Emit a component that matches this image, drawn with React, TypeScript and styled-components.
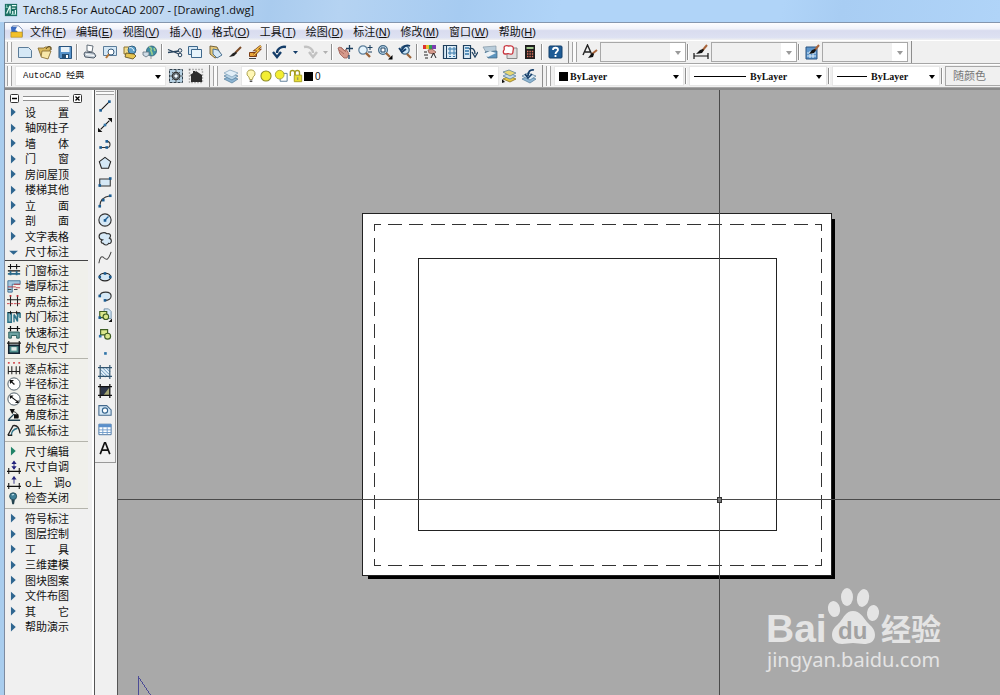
import React from 'react';
import styled, { createGlobalStyle } from 'styled-components';

const GlobalStyle = createGlobalStyle`
  * { box-sizing: border-box; }
  html, body { margin: 0; padding: 0; }
  body {
    background: #a9a9a9;
    color: #111;
    font-family: "Open Sans", "Noto Sans CJK SC", sans-serif;
    font-size: 11px;
  }
  button, select { font: inherit; color: inherit; }
`;

/* ---------- window chrome ---------- */

const Window = styled.div`
  display: flex;
  flex-direction: column;
  height: 100vh;
  overflow: hidden;
`;

const TitleBar = styled.header`
  display: flex;
  align-items: center;
  gap: 5px;
  height: 22px;
  padding: 0 0 2px 4px;
  background:
    linear-gradient(100deg, #d3e4f5 0, #c6dcf3 14%, #a9cbee 27%, #b5d3f2 34%, #a6cbf1 46%, #b0d4f8 56%, #b0d4f8 78%, #a8cdf3 84%, #b0d4f8 100%);
`;

const Title = styled.h1`
  margin: 0;
  font-family: "Open Sans", sans-serif;
  font-size: 11px;
  font-weight: 400;
  line-height: 18px;
  white-space: nowrap;
`;

const Frame = styled.div`
  flex: 1;
  display: flex;
  flex-direction: column;
  min-height: 0;
  border-left: 4px solid #a9cdee;
`;

const Client = styled.div`
  flex: 1;
  display: flex;
  flex-direction: column;
  min-height: 0;
  border-top: 1px solid #8496ae;
  border-left: 1px solid #7d8ba0;
  background: #f0f0f0;
`;

const MenuBar = styled.nav`
  display: flex;
  align-items: center;
  gap: 6px;
  height: 17px;
  padding-left: 5px;
  background: linear-gradient(#fdfdff 0, #f0f2fa 35%, #d9dcef 45%, #dde1f2 85%, #f0f0f0 100%);
`;

const MenuList = styled.div`
  display: flex;
  gap: 10px;
`;

const MenuItem = styled.button`
  padding: 0;
  border: 0;
  background: none;
  font-family: "Liberation Sans", "Noto Sans CJK SC", sans-serif;
  line-height: 16px;
  white-space: nowrap;
`;

/* ---------- toolbars ---------- */

const ToolbarRow = styled.div`
  display: flex;
  align-items: center;
  height: 24px;
  border-top: 1px solid #fff;
  border-bottom: 1px solid #a6a6a6;
  overflow: hidden;
`;

const Toolbar = styled.div`
  display: flex;
  align-items: center;
  flex: none;
  height: 22px;
  padding-right: 3px;
  border-right: 1px solid #8d8d8d;
  & + & { padding-left: 1px; }
`;

const Grip = styled.div<{ $across?: boolean }>`
  flex: none;
  width: ${(p) => (p.$across ? '18px' : '5px')};
  height: ${(p) => (p.$across ? '4px' : '20px')};
  margin: ${(p) => (p.$across ? '1px 0' : '0 3px 0 2px')};
  border: 1px solid #a3a3a3;
  border-width: ${(p) => (p.$across ? '1px 0' : '0 1px')};
  background: #fbfbfb;
`;

const ToolButton = styled.button<{ $narrow?: boolean; $tall?: number }>`
  display: flex;
  align-items: center;
  justify-content: center;
  flex: none;
  width: ${(p) => (p.$narrow ? '10px' : '20px')};
  height: ${(p) => p.$tall ?? 20}px;
  padding: 0;
  border: 0;
  background: none;
`;

const Separator = styled.span`
  flex: none;
  width: 2px;
  height: 16px;
  margin: 0 2px 0 1px;
  border-left: 1px solid #8f8f8f;
  background: #fff;
`;

const Combo = styled.div<{ $width: number; $inset: number; $disabled?: boolean }>`
  position: relative;
  display: flex;
  align-items: center;
  gap: 1px;
  flex: none;
  width: ${(p) => p.$width}px;
  height: 20px;
  padding-left: ${(p) => p.$inset}px;
  border: 1px solid ${(p) => (p.$disabled ? '#a8a8a8' : '#e6e6e6')};
  background: ${(p) => (p.$disabled ? 'linear-gradient(to left, #fff 15px, #f0f0f0 15px)' : '#fff')};
`;

const Select = styled.select<{ $face?: 'mono' | 'serif' | 'sans' }>`
  flex: 1;
  min-width: 0;
  height: 18px;
  padding: 0 14px 0 1px;
  border: 0;
  appearance: none;
  background: transparent;
  opacity: 1;
  color: #111;
  font-family: ${(p) =>
    p.$face === 'serif'
      ? '"Liberation Serif", serif'
      : p.$face === 'mono'
        ? '"Liberation Mono", "Noto Sans CJK SC", monospace'
        : '"Liberation Sans", "Noto Sans CJK SC", sans-serif'};
  font-size: ${(p) => (p.$face === 'mono' ? '9px' : '10px')};
  font-weight: ${(p) => (p.$face === 'serif' ? 700 : 400)};
  &:disabled { color: #777; font-size: 11px; }
`;

const Caret = styled.span<{ $dim?: boolean }>`
  position: absolute;
  right: 4px;
  top: 8px;
  border: solid transparent;
  border-width: 4px 3px 0;
  border-top-color: ${(p) => (p.$dim ? '#9a9a9a' : '#000')};
  pointer-events: none;
`;

const Swatch = styled.span`
  flex: none;
  width: 9px;
  height: 9px;
  background: #000;
`;

const LineSample = styled.span<{ $width: number }>`
  flex: none;
  width: ${(p) => p.$width}px;
  height: 1px;
  margin-right: 2px;
  background: #000;
`;

/* ---------- workspace ---------- */

const Workspace = styled.main`
  flex: 1;
  display: flex;
  min-height: 0;
  border-top: 2px solid #8a8a8a;
`;

const Palette = styled.aside`
  flex: none;
  width: 90px;
  padding-right: 6px;
  border-right: 1px solid #555;
  background: linear-gradient(to left, #fff 2px, #f0f0f0 2px);
`;

const PaletteHeader = styled.div`
  display: flex;
  align-items: center;
  gap: 4px;
  height: 14px;
  padding: 2px 6px 0 5px;
`;

const PaletteGrip = styled.div`
  flex: 1;
  height: 5px;
  border: 1px solid #8e8e8e;
  border-width: 1px 0;
  background: #fff;
`;

const BoxButton = styled.button`
  display: flex;
  width: 9px;
  height: 9px;
  padding: 0;
  border: 0;
  background: none;
`;

const PaletteGroup = styled.ul<{ $shade?: boolean; $strong?: boolean }>`
  margin: 0;
  padding: 0 0 ${(p) => (p.$shade ? '3px' : '1px')} 2px;
  list-style: none;
  border-bottom: 1px solid ${(p) => (p.$strong ? '#444' : '#b4b4ac')};
  background: ${(p) => (p.$shade ? '#f0f0eb' : '#f0f0f0')};
  & + & { padding-top: 1px; }
  &:last-child { border-bottom: 0; }
`;

const PaletteRow = styled.li`
  height: 16px;
  &:nth-child(even) { height: 15px; }
`;

const PaletteButton = styled.button`
  display: flex;
  align-items: center;
  gap: 4px;
  height: 100%;
  padding: 0;
  border: 0;
  background: none;
  font-family: "Noto Sans CJK SC", sans-serif;
  font-size: 11px;
  line-height: 15px;
  white-space: pre;
`;

const DrawBar = styled.div`
  flex: none;
  width: 23px;
  border-right: 1px solid #555;
  background: #f0f0f0;
`;

const DrawTools = styled.div`
  display: flex;
  flex-direction: column;
  align-items: center;
  width: 21px;
  padding-bottom: 5px;
  border: 1px solid #999;
  border-width: 0 1px 1px 0;
`;

const Canvas = styled.section`
  position: relative;
  flex: 1;
  min-width: 0;
  background: #a9a9a9;
  overflow: hidden;
`;

const Drawing = styled.svg`
  position: absolute;
  inset: 0;
  width: 100%;
  height: 100%;
`;

const Watermark = styled.svg`
  position: absolute;
  right: 50px;
  bottom: 20px;
`;

/* ---------- icons ---------- */

const N = '#1d3f5e';
const B = '#2f74a8';
const L = '#d5e8f6';

const icons: Record<string, React.ReactNode> = {
  app: (
    <>
      <rect width="14" height="14" x="1" y="1" fill="#1b6f63" />
      <path d="M3 12 7 3v9M9 3h5M9 6h4M10 9v4M13 8v5" stroke="#e9fff8" strokeWidth="1.4" fill="none" />
      <path d="M2 5h3M3 2v3M8 13h6" stroke="#8fd3c2" fill="none" />
    </>
  ),
  doc: (
    <>
      <path d="M3 1h7l4 4v8H3z" fill="#fff" stroke="#6a7fa8" />
      <path d="M1 2h7l-2 4 3 1-7 4z" fill="#3c6cc0" />
      <path d="M1 8h13v6H1z" fill="#f2c12c" stroke="#a57a10" strokeWidth=".6" />
    </>
  ),
  new: <path d="M1.500 3.500h10l3 3v7h-13z" fill={L} stroke="#5b7c99" />,
  open: (
    <>
      <path d="M1 4h6l1-1h6l-3 10-7-1z" fill="#d9b85c" stroke="#80662a" strokeWidth=".8" />
      <path d="M5 7h9l-3 8-7-2z" fill="#f8e7a8" stroke="#80662a" strokeWidth=".8" />
      <path d="M9 5c2-4 6-3 5 1" stroke="#5a4a20" fill="none" />
    </>
  ),
  save: (
    <>
      <path d="M2 2.500h12.500v12H3l-1-1z" fill="#5793cb" stroke="#28537d" />
      <path d="M4 3h8.500v5H4z" fill="#e8f1f8" />
      <path d="M5 10h7v4H5z" fill="#244d74" />
      <path d="M9 11h2v3H9z" fill="#fff" />
    </>
  ),
  print: (
    <>
      <path d="m5 1 6 1-1 6-5-1z" fill="#fff" stroke="#53606c" strokeWidth=".9" />
      <path d="m3 8 9 1 2 3-2 2-9-1-1-3z" fill="#c5cfd8" stroke="#3c4a58" strokeWidth=".9" />
      <path d="m4 10.500 8 1" stroke="#fff" />
    </>
  ),
  preview: (
    <>
      <path d="M1.500 2.500h13v9h-13z" fill={L} stroke="#5b7c99" />
      <circle cx="9" cy="8" r="3" fill="#fff" stroke="#365a7a" />
      <path d="m7 10-3 4" stroke="#b7793b" strokeWidth="2" />
    </>
  ),
  publish: (
    <>
      <path d="M2 3h8v7H2z" fill="#f1dc8c" stroke="#8e7430" />
      <circle cx="10" cy="6" r="4" fill="#5ea0c8" stroke="#1e4c70" strokeWidth=".8" />
      <path d="m4 9 8 1 2 2-3 3-8-2z" fill="#e6c552" stroke="#56471d" strokeWidth=".8" />
      <path d="M7 4c2-1 4 0 5 3" stroke="#fff" />
    </>
  ),
  globe: (
    <>
      <circle cx="9.500" cy="7" r="5" fill="#3f8fa3" stroke="#2c5d74" strokeWidth=".8" />
      <path d="M7 3c2 0 3 2 2 3s2 2 1 5M12 4l1 3" stroke="#9fd08d" strokeWidth="1.600" fill="none" />
      <path d="M1 8h6v3l-3 2-3-2z" fill="#cfdce6" stroke="#61717f" strokeWidth=".8" />
      <path d="M9 12v3" stroke="#999" />
    </>
  ),
  cut: (
    <>
      <path d="M1 5.500l11 4.500M1 8.500l11-1.500" stroke="#28445e" strokeWidth="1.300" />
      <circle cx="13" cy="6.500" r="1.800" fill="none" stroke="#28445e" />
      <circle cx="13" cy="11" r="1.800" fill="none" stroke="#28445e" />
    </>
  ),
  copy: (
    <>
      <path d="M1.500 2.500h9v8h-9z" fill={L} stroke="#3f688c" />
      <path d="M4.500 5.500h10v8h-10z" fill="#e8f4fb" stroke="#3f688c" />
    </>
  ),
  paste: (
    <>
      <path d="m3 2 7 1 4 8-6 3-5-4z" fill="#e6c978" stroke="#6a5630" strokeWidth=".9" />
      <path d="m6 5 5 1 4 5-5 3-4-4z" fill={L} stroke="#3f688c" strokeWidth=".9" />
    </>
  ),
  brush: (
    <>
      <path d="m14 3-6 6" stroke="#7a4a26" strokeWidth="2" />
      <path d="m9 8-3 1-4 4 5-1 3-3z" fill="#222" />
    </>
  ),
  block: (
    <>
      <path d="M2.500 8.500h7v4h-7z" fill="#e8a33a" stroke="#7b3d16" />
      <path d="m14 2-5 4h3L7 11" stroke="#7b3d16" strokeWidth="2.600" fill="none" />
      <path d="m14 2-5 4h3L7 11" stroke="#f8c84c" strokeWidth="1.200" fill="none" />
      <path d="M2 14.500h7" stroke="#444" />
    </>
  ),
  undo: <path d="M14 3C9 2 5 5 5 9M1 8l4 5 4-5" stroke="#143d69" strokeWidth="2.400" fill="none" />,
  redo: <path d="M2 3c5-1 9 2 9 6M7 8l4 5 4-5" stroke="#c2c2c2" strokeWidth="2.400" fill="none" />,
  pan: (
    <>
      <path d="m1 4 2-1 5 4 1-2 3 5-2 4H7L3 10z" fill="#d59a8c" stroke="#9b5a50" strokeWidth=".8" />
      <path d="m4 3 5 5M2 6l5 4" stroke="#9b5a50" strokeWidth=".7" />
      <path d="M12.500 1v7M9 4.500h7M12 11v4" stroke={N} strokeWidth="1.300" />
    </>
  ),
  zoom: (
    <>
      <circle cx="6" cy="6" r="4.200" fill="#e4f3fc" stroke="#5d7f9b" strokeWidth="1.200" />
      <path d="m9 9 4 4" stroke="#9b6438" strokeWidth="2.400" />
      <path d="M13 1v5M10.500 3.500h5M11 8h4" stroke={N} />
    </>
  ),
  zoomWindow: (
    <>
      <circle cx="6" cy="6" r="4.400" fill="#cbe6f8" stroke="#416886" strokeWidth="1.200" />
      <path d="M4 4h4v4H4z" fill="#fff" stroke={N} />
      <path d="m9 9 4 4" stroke="#9b6438" strokeWidth="2.200" />
      <path d="M15.500 11v4.500H11z" fill="#000" />
    </>
  ),
  zoomPrev: (
    <>
      <circle cx="8" cy="6" r="4.200" fill="#cbe6f8" stroke="#416886" strokeWidth="1.200" />
      <path d="M13 2C9 0 6 3 5 6M2 4l3 4 4-3" stroke="#143d69" strokeWidth="1.800" fill="none" />
      <path d="m10 10 4 4" stroke="#9b6438" strokeWidth="2.200" />
    </>
  ),
  props: (
    <>
      <path d="M1 1h3v4H1z" fill="#d33" /><path d="M4 1h3v4H4z" fill="#e8c22e" />
      <path d="M7 1h3v4H7z" fill="#2d9f55" /><path d="M10 1h4v4h-4z" fill="#7b3fb0" />
      <path d="m6 6 4-1 4 3-2 2-5-1z" fill="#d59a8c" stroke="#7b4a41" strokeWidth=".7" />
      <path d="M2 8h3M2 11h4M9 14l2.500-5 2.500 5M3 14h3" stroke="#222" fill="none" />
    </>
  ),
  design: (
    <>
      <path d="M1.500 1.500h13v13h-13z" fill="#dcecf7" stroke={N} strokeWidth="1.200" />
      <path d="M4.500 2v12" stroke={N} />
      <path d="M7 4h2v2H7zM11 4h2v2h-2zM7 8h2v2H7zM11 8h2v2h-2zM7 12.500h2M11 12.500h2" stroke={B} fill="#fff" />
    </>
  ),
  palettes: (
    <>
      <path d="M1.500 1.500h7v13h-7z" fill="#dcecf7" stroke={N} strokeWidth="1.200" />
      <path d="M3 4h4M3 7h4M3 10h4" stroke={B} strokeWidth="1.400" />
      <path d="M7 5c4-2 6 1 6 5M10 8l3 5 3-5" stroke={N} strokeWidth="1.300" fill="none" />
    </>
  ),
  sheets: (
    <>
      <path d="m1 3 13-1v5L4 8z" fill="#b8ccda" stroke="#8296a5" strokeWidth=".7" />
      <path d="m3 8 12-1v7H6z" fill="#5d94bd" stroke="#41657f" strokeWidth=".7" />
      <path d="m1 10 7-3 6 2-8 4z" fill="#edf3f7" />
    </>
  ),
  markup: (
    <>
      <path d="M5 4h10v10.500H5z" fill="#ddd" stroke="#888" />
      <path d="M3 2c2-1 3 0 4 0s3-1 4 1 0 3 0 4 0 4-3 3-3 0-5 0-2-3-1-4-1-3 1-4z" fill="#fff" stroke="#c8343d" strokeWidth="1.300" />
    </>
  ),
  calc: (
    <>
      <path d="M3 1h10v14H3z" fill="#1d1d1d" />
      <path d="M4.500 3h7v2h-7z" fill="#9ec48b" />
      <path d="M5 7.500h7M5 10h7M5 12.500h7" stroke="#e0705c" strokeWidth="1.300" strokeDasharray="1.400 1" />
    </>
  ),
  help: (
    <>
      <rect x="2" y="2" width="13" height="12" rx="1" fill="#1f5c96" stroke="#123e6b" />
      <path d="M6 6c0-3 5-3 5 0 0 1.500-2.500 1.500-2.500 4M8.500 11v2" stroke="#fff" strokeWidth="1.800" fill="none" />
    </>
  ),
  textStyle: (
    <>
      <path d="m1 11 4.500-10L10 11M3 8h5" stroke="#222" strokeWidth="1.400" fill="none" />
      <path d="m15 6-5 4" stroke="#a8643a" strokeWidth="2" />
      <path d="m11 9-2 1-3 4 5-1 1-3z" fill="#111" />
    </>
  ),
  dimStyle: (
    <>
      <path d="M1 9v6M15 9v6M1 12h14" stroke="#111" strokeWidth="1.200" />
      <path d="m14 1-5 6" stroke="#a8643a" strokeWidth="2" />
      <path d="m10 5-3 1-4 4 6-1 2-3z" fill="#111" />
    </>
  ),
  tableStyle: (
    <>
      <path d="M2 3h11v12H2z" fill="#5b94cb" stroke="#285380" />
      <path d="M3 9h9M3 12h9M6 7v7M9 7v7" stroke="#dcecf8" />
      <path d="m15 1-5 6" stroke="#a8643a" strokeWidth="2" />
      <path d="m11 5-3 1-3 4 5-1 2-3z" fill="#111" />
    </>
  ),
  gear: (
    <>
      <path d="M1.500 1.500h13v13h-13z" fill="#b5d0e2" stroke="#32424e" strokeDasharray="3 1" />
      <circle cx="8" cy="8" r="3.500" fill="none" stroke="#333" strokeWidth="1.600" />
      <path d="M8 2v12M2 8h12M4 4l8 8M12 4l-8 8" stroke="#444" strokeWidth=".8" />
      <circle cx="8" cy="8" r="1.500" fill="#f7fbff" />
    </>
  ),
  home: (
    <>
      <path d="M1.500 1.500h13v13h-13z" fill="none" stroke="#777" strokeDasharray="1 2" strokeWidth="1.400" />
      <path d="m2 7 3-2V3h2v1l1-1 6 4v7H3V8z" fill="#2c2c2c" />
    </>
  ),
  layers: (
    <>
      <path d="m1 11 6-3 8 3-6 4z" fill="#8eb6d4" stroke="#4d7898" strokeWidth=".7" />
      <path d="m1 8 6-3 8 3-6 4z" fill="#b7d3e6" stroke="#4d7898" strokeWidth=".7" />
      <path d="m1 5 6-3 8 3-6 4z" fill="#e2eff8" stroke="#7d9fb8" strokeWidth=".7" />
    </>
  ),
  layerCurrent: (
    <>
      <path d="m2 11 6-3 7 3-6 3z" fill="#e5c541" stroke="#806919" strokeWidth=".7" />
      <path d="m2 8 6-3 7 3-6 3z" fill="#c6dcea" stroke="#4d7898" strokeWidth=".7" />
      <path d="m2 4 6-2 7 3-6 3z" fill="#e8d774" stroke="#4d7898" strokeWidth=".7" />
      <path d="M1 15v-4l3 3z" fill="#111" />
    </>
  ),
  layerPrev: (
    <>
      <path d="m1 11 6-3 8 3-6 4z" fill="#8eb6d4" stroke="#4d7898" strokeWidth=".7" />
      <path d="m1 8 6-3 8 3-6 4z" fill="#dcebf5" stroke="#4d7898" strokeWidth=".7" />
      <path d="M13 2C9 1 7 4 7 8M4 6l3 4 4-4" stroke="#143d69" strokeWidth="1.700" fill="none" />
    </>
  ),
  bulb: (
    <>
      <path d="M8 1a4.300 4.300 0 0 0-2.500 8L6.500 12h3l1-3A4.300 4.300 0 0 0 8 1z" fill="#fff7b5" stroke="#a39843" />
      <path d="M6.500 14h3" stroke="#555" strokeWidth="1.800" />
    </>
  ),
  sun: <circle cx="8" cy="8" r="5.800" fill="#f3ee32" stroke="#8d8b24" strokeWidth="1.200" />,
  freeze: (
    <>
      <path d="M7 5h8v9H7z" fill="#fff" stroke="#4f7290" />
      <circle cx="6.500" cy="6.500" r="5" fill="#f3ee32" stroke="#a3a03a" />
    </>
  ),
  lock: (
    <>
      <path d="M1.500 8V4c0-3 5-3 5 0v3M7 7V4c0-3 5-3 5 0v3" stroke="#a39c1f" strokeWidth="1.600" fill="none" />
      <path d="M6 7h8.500v7.500H6z" fill="#e7df35" stroke="#a39c1f" />
      <path d="M10 9.500v3" stroke="#777" />
    </>
  ),
  line: <path d="M3 13 13 3" stroke="#111" strokeWidth="1.200" />,
  xline: (
    <>
      <path d="M3 13 13 3" stroke="#111" strokeWidth="1.200" />
      <path d="M0 16v-5l5 5zM16 0v5l-5-5z" fill="#111" />
      <path d="M6.500 6.500h3v3h-3z" fill={B} />
    </>
  ),
  pline: <path d="M3 12h7c5 0 5-7 0-7" stroke="#333" fill="none" strokeWidth="1.200" />,
  polygon: <path d="m8 1.500 6.500 5-2.500 7.500H4L1.500 6.500z" fill={L} stroke="#222" strokeWidth="1.200" />,
  rect: <path d="M2 4.500h12v8H2z" fill={L} stroke="#333" strokeWidth="1.200" />,
  arc: <path d="M2 14C2 7 7 3 14 2" stroke="#333" fill="none" strokeWidth="1.200" />,
  circle: (
    <>
      <circle cx="8" cy="8" r="7" fill={L} stroke="#333" strokeWidth="1.300" />
      <path d="m8 8 4-4" stroke="#1b5c92" strokeWidth="1.400" />
      <path d="M6.500 7h3v3h-3z" fill="#1b5c92" />
    </>
  ),
  cloud: (
    <path d="M5 1c3-1 4 0 5 1 5-1 5 3 3 5 4 2 2 7-1 6-1 3-5 2-6 0-3 0-3-3-1-4-5-1-5-7 0-8z" fill={L} stroke="#333" strokeWidth="1.300" />
  ),
  spline: <path d="M1 14c1-7 3-9 6-6s5 2 8-7" stroke="#444" strokeWidth="1.200" fill="none" />,
  ellipse: <ellipse cx="8" cy="8" rx="6.500" ry="4.300" fill={L} stroke="#222" strokeWidth="1.400" />,
  ellipseArc: <path d="M2 8C3 2 15 2 15 8c0 3-3 5-7 5" fill={L} stroke="#333" strokeWidth="1.300" />,
  insert: (
    <>
      <path d="M7 1h5l3 3v8H7z" fill={L} stroke="#6a8ba6" />
      <path d="M2 4h8v7H2z" fill="#dbe88c" stroke="#3d5d22" strokeWidth="1.300" />
      <circle cx="9" cy="10" r="3.200" fill="#dbe88c" stroke="#3d5d22" strokeWidth="1.300" />
      <path d="M16 12v4h-4z" fill="#111" />
    </>
  ),
  makeBlock: (
    <>
      <path d="M3 3h8v6H3z" fill="#dbe88c" stroke="#3d5d22" strokeWidth="1.300" />
      <circle cx="11" cy="10.500" r="3.400" fill="#dbe88c" stroke="#3d5d22" strokeWidth="1.300" />
      <path d="M1 9h3v3H1z" fill={B} />
    </>
  ),
  point: <path d="M7 7h3v3H7z" fill={B} />,
  hatch: (
    <>
      <path d="M3 3h10v10H3z" fill="#e2f0fa" />
      <path d="m3 9 5 5M3 5l9 9M5 3l8 8M9 3l5 5" stroke="#5d8db3" />
      <path d="M2.500 0v16M13.500 0v16M0 3h16M0 13h16" stroke="#31546f" strokeWidth="1.300" />
    </>
  ),
  gradient: (
    <>
      <path d="M3 3h10v10H3z" fill="#2d3648" />
      <path d="M13 4v9H6z" fill="#a6a774" />
      <path d="M2.500 0v16M13.500 0v16M0 3h16M0 13h16" stroke="#111" strokeWidth="1.400" />
    </>
  ),
  region: (
    <>
      <path d="M1 3h9l5 5v6H1z" fill={L} stroke="#44698c" strokeWidth="1.200" />
      <circle cx="8" cy="8.500" r="3" fill="#fff" stroke="#35658e" strokeWidth="1.300" />
    </>
  ),
  table: (
    <>
      <path d="M1 2.500h14v12H1z" fill="#fff" stroke="#3c6a9c" />
      <path d="M1 2.500h14V6H1z" fill="#5a8fca" />
      <path d="M1 9h14M1 12h14M5.500 6v8M10.500 6v8" stroke="#6a98c9" />
    </>
  ),
  mtext: <path d="M2.500 15 7.500 2h1l5 13M4.500 10.500h7" stroke="#111" strokeWidth="1.900" fill="none" />,
  arrow: <path d="M4.500 3v10L10 8z" fill="#2f6690" />,
  arrowGreen: <path d="M4.500 3v10L10 8z" fill="#208368" />,
  arrowDown: <path d="M2.500 6.500h10l-5 4.500z" fill="#2f6690" />,
  dimWindow: (
    <>
      <path d="M1 4h14M1 9h14M4 1v6M11 1v6" stroke="#111" strokeWidth="1.200" />
      <path d="M1 12.500h14M4 9v5M11 9v5" stroke="#2b6a8a" strokeWidth="2" />
    </>
  ),
  dimWall: (
    <>
      <path d="M1 2h14v4H6v9H1z" fill="#a3c8e0" stroke="#3b6d92" />
      <path d="M1 9h9M8 6h7M10 10h5" stroke="#c3343d" />
      <path d="M8 12h4M1 12h4" stroke="#333" />
    </>
  ),
  dimTwo: (
    <>
      <path d="M0 6.500h16M4 2v12M12 2v12" stroke="#222" strokeWidth="1.200" />
      <path d="M0 11h16" stroke="#c3343d" strokeDasharray="3 1" />
      <path d="M3 1h2v2H3zM11 1h2v2h-2z" fill="#c3343d" />
    </>
  ),
  dimDoor: (
    <>
      <path d="M1 3v11h4V3zM8 5v9M8 5l4 8V4h3v5" stroke="#2b7186" strokeWidth="1.600" fill="#8ab6bf" />
      <path d="M1 3h14M4 1v4M11 1v4" stroke="#111" />
    </>
  ),
  dimQuick: (
    <>
      <path d="M2 8h12v7h-3v-3H5v3H2z" fill="#6fa3a2" stroke="#1f5554" />
      <path d="M1 4h14M4 1v6M12 1v6" stroke="#111" strokeWidth="1.400" />
    </>
  ),
  dimOuter: (
    <>
      <path d="M2 5h12v9H2z" fill="#4f8f8e" stroke="#123" strokeWidth="1.800" />
      <path d="M5 7h6v4H5z" fill="#dfe9e6" />
      <path d="M0 2.500h16M2 0v5M14 0v5" stroke="#111" strokeWidth="1.300" />
    </>
  ),
  dimPoints: (
    <>
      <path d="M1.500 6v9M5.500 6v9M10.500 6v9M14.500 6v9M1 12h14" stroke="#222" strokeWidth="1.200" />
      <path d="M1 1h2v2H1zM7 1h2v2H7zM13 1h2v2h-2z" fill="#d24a50" />
    </>
  ),
  dimRadius: (
    <>
      <circle cx="8" cy="8" r="7" fill="#fff" stroke="#3b4d58" />
      <path d="m8.500 8.500-4-3.500" stroke="#111" strokeWidth="1.500" />
      <path d="M3 3.500h5L3.500 8z" fill="#111" />
    </>
  ),
  dimDiameter: (
    <>
      <circle cx="8" cy="8" r="7" fill="#fff" stroke="#3b4d58" />
      <path d="m4 5 8 6" stroke="#111" strokeWidth="1.400" />
      <path d="M3 4h4.500L3.500 8zM13.500 12.500H9L13 9z" fill="#111" />
    </>
  ),
  dimAngle: (
    <>
      <path d="M1 14h14M2 13l6-6" stroke="#245" strokeWidth="1.600" />
      <path d="M6 4c4 0 7 3 7 7" stroke="#111" fill="none" />
      <path d="M3 1h6L6 7zM8 7h5v5H8z" fill="#111" />
    </>
  ),
  dimArc: (
    <>
      <path d="M1 14 7 3c5-1 7 3 8 9" stroke="#222" fill="none" strokeWidth="1.500" />
      <path d="M5 14c0-5 3-7 7-8" stroke="#2b7186" fill="none" strokeWidth="1.500" />
      <path d="M1 14h5" stroke="#111" strokeWidth="1.500" />
    </>
  ),
  dimAdjust: (
    <>
      <path d="M0 13h16M2 9v7M14 9v7" stroke="#111" strokeWidth="1.200" />
      <path d="M8 2v8" stroke="#22227c" />
      <path d="M5 4.500 8 .5l3 4zM5 7l3 4 3-4z" fill="#22227c" />
    </>
  ),
  dimUp: (
    <>
      <path d="M0 13h16M2 9v7M14 9v7" stroke="#111" strokeWidth="1.200" />
      <path d="M8 2v8" stroke="#22227c" />
      <path d="M5 5l3-4 3 4z" fill="#22227c" />
    </>
  ),
  check: (
    <>
      <circle cx="7" cy="6" r="4" fill="#3f8097" stroke="#1f4654" />
      <path d="M5 10h4l-1 5H6z" fill="#24434f" />
      <path d="M5.500 4.500 8 4" stroke="#c7e4ee" strokeWidth="1.400" />
    </>
  ),
};

const nodes: Record<string, [number, number][]> = {
  line: [[3, 13], [13, 3]],
  pline: [[3, 12], [10, 12], [10, 5]],
  rect: [[2, 12], [14, 4]],
  arc: [[2, 14], [6, 7], [14, 2]],
  ellipse: [[8, 4], [2, 8], [14, 8]],
  ellipseArc: [[2, 8], [8, 13]],
  insert: [[2, 11]],
};

const Icon = ({ name, size = 16 }: { name: string; size?: number }) => (
  <svg width={size} height={size} viewBox="0 0 16 16" fill="none" aria-hidden="true">
    {icons[name]}
    {(nodes[name] ?? []).map(([x, y]) => (
      <rect key={`${x}-${y}`} x={x - 1.5} y={y - 1.5} width="3" height="3" fill="#1b5c92" />
    ))}
  </svg>
);

/* ---------- data ---------- */

const menus: [string, string][] = [
  ['文件', 'F'], ['编辑', 'E'], ['视图', 'V'], ['插入', 'I'], ['格式', 'O'], ['工具', 'T'],
  ['绘图', 'D'], ['标注', 'N'], ['修改', 'M'], ['窗口', 'W'], ['帮助', 'H'],
];

const standardTools = [
  'new', 'open', 'save', '|', 'print', 'preview', 'publish', 'globe', '|', 'cut', 'copy', 'paste', 'brush', 'block', '|',
  'undo', 'v', 'redo', 'vdim', '|', 'pan', 'zoom', 'zoomWindow', 'zoomPrev', '|',
  'props', 'design', 'palettes', 'sheets', 'markup', 'calc', '|', 'help',
];

const drawTools = [
  'line', 'xline', 'pline', 'polygon', 'rect', 'arc', 'circle', 'cloud', 'spline', 'ellipse', 'ellipseArc',
  'insert', 'makeBlock', 'point', 'hatch', 'gradient', 'region', 'table', 'mtext',
];

const GAP = '\u3000\u3000';

type Group = { shade?: boolean; strong?: boolean; rows: [string, string][] };

const groups: Group[] = [
  {
    strong: true,
    rows: [
      ['arrow', `设${GAP}置`], ['arrow', '轴网柱子'], ['arrow', `墙${GAP}体`], ['arrow', `门${GAP}窗`], ['arrow', '房间屋顶'],
      ['arrow', '楼梯其他'], ['arrow', `立${GAP}面`], ['arrow', `剖${GAP}面`], ['arrow', '文字表格'], ['arrowDown', '尺寸标注'],
    ],
  },
  {
    shade: true,
    rows: [
      ['dimWindow', '门窗标注'], ['dimWall', '墙厚标注'], ['dimTwo', '两点标注'],
      ['dimDoor', '内门标注'], ['dimQuick', '快速标注'], ['dimOuter', '外包尺寸'],
    ],
  },
  {
    shade: true,
    rows: [
      ['dimPoints', '逐点标注'], ['dimRadius', '半径标注'], ['dimDiameter', '直径标注'],
      ['dimAngle', '角度标注'], ['dimArc', '弧长标注'],
    ],
  },
  {
    shade: true,
    rows: [['arrowGreen', '尺寸编辑'], ['dimAdjust', '尺寸自调'], ['dimUp', 'o上\u3000调o'], ['check', '检查关闭']],
  },
  {
    rows: [
      ['arrow', '符号标注'], ['arrow', '图层控制'], ['arrow', `工${GAP}具`], ['arrow', '三维建模'],
      ['arrow', '图块图案'], ['arrow', '文件布图'], ['arrow', `其${GAP}它`], ['arrow', '帮助演示'],
    ],
  },
];

/* ---------- parts ---------- */

const DropMark = ({ dim }: { dim?: boolean }) => (
  <svg width="5" height="3" aria-hidden="true">
    <path d="M0 0h5L2.500 3z" fill={dim ? '#b0b0b0' : '#143d69'} />
  </svg>
);

const DropDown = ({
  label, value = '', width, inset = 6, disabled, face, children,
}: {
  label: string;
  value?: string;
  width: number;
  inset?: number;
  disabled?: boolean;
  face?: 'mono' | 'serif' | 'sans';
  children?: React.ReactNode;
}) => (
  <Combo $width={width} $inset={inset} $disabled={disabled}>
    {children}
    <Select aria-label={label} disabled={disabled} $face={face}>
      <option>{value}</option>
    </Select>
    <Caret $dim={disabled} />
  </Combo>
);

const StandardBar = () => (
  <Toolbar>
    <Grip />
    {standardTools.map((t, i) => {
      if (t === '|') return <Separator key={i} />;
      if (t === 'v' || t === 'vdim') {
        return (
          <ToolButton key={i} $narrow aria-label="history">
            <DropMark dim={t === 'vdim'} />
          </ToolButton>
        );
      }
      return (
        <ToolButton key={i} aria-label={t}>
          <Icon name={t} />
        </ToolButton>
      );
    })}
  </Toolbar>
);

const StylesBar = () => (
  <Toolbar>
    <Grip />
    <ToolButton aria-label="text style"><Icon name="textStyle" /></ToolButton>
    <DropDown label="text style name" width={86} disabled />
    <Separator />
    <ToolButton aria-label="dimension style"><Icon name="dimStyle" /></ToolButton>
    <DropDown label="dimension style name" width={86} disabled />
    <Separator />
    <ToolButton aria-label="table style"><Icon name="tableStyle" /></ToolButton>
    <DropDown label="table style name" width={86} disabled />
  </Toolbar>
);

const Paper = () => (
  <Drawing aria-label="layout sheet">
    <g shapeRendering="crispEdges">
      <rect x="250" y="129" width="467" height="360" fill="#000" />
      <rect x="244.500" y="123.500" width="469" height="362" fill="#fff" stroke="#222" />
      <g stroke="#333">
        <path d="M256 134.500h447M256 475.500h447" strokeDasharray="14 7.350" strokeDashoffset="7.350" />
        <path d="M256.500 134v342M703.500 134v342" strokeDasharray="14 7.400" strokeDashoffset="7.400" />
      </g>
      <rect x="300.500" y="168.500" width="358" height="272" fill="none" stroke="#222" />
      <path d="M20.500 605v-18l12 18" stroke="#4b4b96" fill="none" />
      <line x1="601.500" y1="0" x2="601.500" y2="100%" stroke="#4a4a4a" />
      <line x1="0" y1="409.500" x2="100%" y2="409.500" stroke="#4a4a4a" />
      <rect x="599.500" y="407.500" width="4" height="5" fill="#777" stroke="#333" />
    </g>
  </Drawing>
);

const Brand = () => (
  <Watermark width="188" height="90" viewBox="-6 0 188 90" fill="#e4e4e4">
    <text x="-2" y="57" fontFamily="Liberation Sans, sans-serif" fontWeight="700" fontSize="39">Bai</text>
    <ellipse cx="66" cy="24" rx="6" ry="8" transform="rotate(-12 66 24)" />
    <ellipse cx="79" cy="12" rx="6" ry="9" />
    <ellipse cx="95" cy="13" rx="6" ry="9" transform="rotate(12 95 13)" />
    <ellipse cx="105" cy="28" rx="6" ry="8" transform="rotate(8 105 28)" />
    <path d="M85 26c7 0 10 6 14 11 4 4 8 7 8 13 0 7-6 9-11 9-4 0-7-1-11-1s-7 1-11 1c-5 0-10-3-10-9s4-9 8-13c4-5 6-11 13-11z" />
    <text x="70" y="54" fill="#a2a2a2" fontFamily="Liberation Sans, sans-serif" fontWeight="700" fontSize="24">du</text>
    <text x="113" y="55" fontFamily="Noto Sans CJK SC, sans-serif" fontWeight="700" fontSize="30">经验</text>
    <text x="-1" y="82" fontFamily="Noto Sans, sans-serif" fontSize="20">jingyan.baidu.com</text>
  </Watermark>
);

export default function App() {
  return (
    <>
      <GlobalStyle />
      <Window>
        <TitleBar>
          <Icon name="app" size={14} />
          <Title>TArch8.5 For AutoCAD 2007 - [Drawing1.dwg]</Title>
        </TitleBar>
        <Frame>
          <Client>
            <MenuBar>
              <Icon name="doc" size={14} />
              <MenuList>
                {menus.map(([name, key]) => (
                  <MenuItem key={key}>
                    {name}(<u>{key}</u>)
                  </MenuItem>
                ))}
              </MenuList>
            </MenuBar>
            <ToolbarRow>
              <StandardBar />
              <StylesBar />
            </ToolbarRow>
            <ToolbarRow>
              <Toolbar>
                <Grip />
                <DropDown label="workspace" value="AutoCAD 经典" width={151} face="mono" />
                <ToolButton aria-label="workspace settings"><Icon name="gear" /></ToolButton>
                <ToolButton aria-label="my workspace"><Icon name="home" /></ToolButton>
              </Toolbar>
              <Toolbar>
                <Grip />
                <ToolButton aria-label="layer manager"><Icon name="layers" /></ToolButton>
                <DropDown label="layer" value="0" width={258} inset={2} face="sans">
                  <Icon name="bulb" size={14} />
                  <Icon name="sun" size={14} />
                  <Icon name="freeze" size={14} />
                  <Icon name="lock" size={14} />
                  <Swatch />
                </DropDown>
                <ToolButton aria-label="make layer current"><Icon name="layerCurrent" /></ToolButton>
                <ToolButton aria-label="previous layer"><Icon name="layerPrev" /></ToolButton>
              </Toolbar>
              <Toolbar>
                <Grip />
                <DropDown label="color" value="ByLayer" width={130} inset={4} face="serif">
                  <Swatch />
                </DropDown>
                <Separator />
                <DropDown label="linetype" value="ByLayer" width={138} inset={4} face="serif">
                  <LineSample $width={52} />
                </DropDown>
                <Separator />
                <DropDown label="lineweight" value="ByLayer" width={108} inset={4} face="serif">
                  <LineSample $width={30} />
                </DropDown>
                <Separator />
                <DropDown label="plot style" value="随颜色" width={120} disabled />
              </Toolbar>
            </ToolbarRow>
            <Workspace>
              <Palette>
                <PaletteHeader>
                  <BoxButton aria-label="collapse">
                    <svg width="9" height="9"><rect x=".5" y=".5" width="8" height="8" rx="1" fill="#fff" stroke="#333" /><path d="M2 4.500h5" stroke="#000" strokeWidth="1.500" /></svg>
                  </BoxButton>
                  <PaletteGrip />
                  <BoxButton aria-label="close">
                    <svg width="9" height="9"><rect x=".5" y=".5" width="8" height="8" rx="1" fill="#fff" stroke="#333" /><path d="m2.500 2.500 4 4m0-4-4 4" stroke="#000" strokeWidth="1.300" /></svg>
                  </BoxButton>
                </PaletteHeader>
                {groups.map((g, i) => (
                  <PaletteGroup key={i} $shade={g.shade} $strong={g.strong}>
                    {g.rows.map(([icon, label]) => (
                      <PaletteRow key={label}>
                        <PaletteButton>
                          <Icon name={icon} size={14} />
                          {label}
                        </PaletteButton>
                      </PaletteRow>
                    ))}
                  </PaletteGroup>
                ))}
              </Palette>
              <DrawBar>
                <DrawTools>
                  <Grip $across />
                  {drawTools.map((t) => (
                    <ToolButton key={t} $tall={19} aria-label={t}>
                      <Icon name={t} size={14} />
                    </ToolButton>
                  ))}
                </DrawTools>
              </DrawBar>
              <Canvas>
                <Paper />
                <Brand />
              </Canvas>
            </Workspace>
          </Client>
        </Frame>
      </Window>
    </>
  );
}
